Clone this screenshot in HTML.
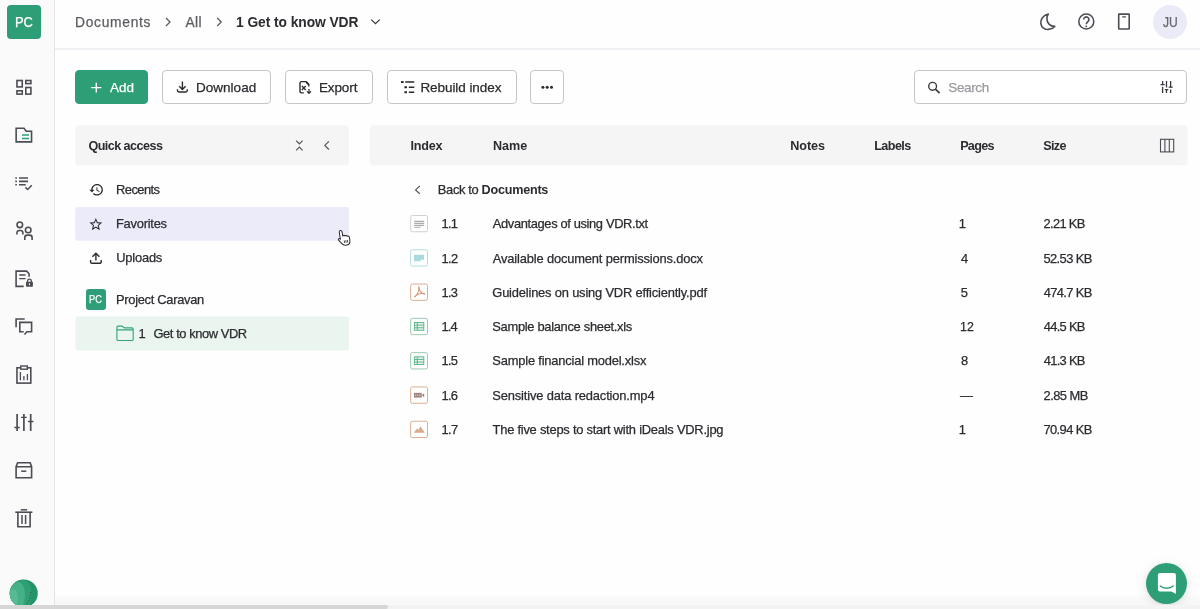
<!DOCTYPE html>
<html lang="en">
<head>
<meta charset="utf-8">
<title>Documents</title>
<style>
*{box-sizing:border-box;margin:0;padding:0}
html,body{width:1200px;height:609px;overflow:hidden;background:#fefefe}
body{font-family:"Liberation Sans",sans-serif;color:#2b2b30;font-size:12.6px;position:relative}
.abs{position:absolute}
.t{position:absolute;white-space:nowrap;line-height:20px;height:20px}
.r{-webkit-text-stroke:0.25px currentColor}
#side{position:absolute;left:0;top:0;width:55px;height:609px;background:#fafafa;border-right:1px solid #e4e4e8}
#logo{position:absolute;left:7px;top:5px;width:34px;height:34px;border-radius:4px;background:#2e9e76}
#hdr{position:absolute;left:55px;top:48px;width:1145px;height:2px;background:#f0f0f4}
.btn{position:absolute;top:70px;height:34px;border:1px solid #c6c6ca;border-radius:4px;background:#fff}
.bar{position:absolute;top:125px;height:40.5px;background:#f5f5f5;border-radius:4px}
.row{position:absolute;left:75px;width:274px;height:34px;border-radius:3px}
.fi{position:absolute;left:410px;width:18px;height:18px;border:1px solid #ccc;border-radius:2px;background:#fff}
#ov{position:absolute;left:0;top:0;width:1200px;height:609px;pointer-events:none}
</style>
</head>
<body>
<div id="side"></div>
<div id="logo"></div>
<div id="hdr"></div>
<div class="abs" style="left:1153px;top:4.5px;width:34px;height:34px;border-radius:50%;background:#ebebf8"></div>

<div class="btn" style="left:75px;width:73px;background:#2e9e76;border-color:#2e9e76"></div>
<div class="btn" style="left:162px;width:109px"></div>
<div class="btn" style="left:285px;width:88px"></div>
<div class="btn" style="left:387px;width:129.5px"></div>
<div class="btn" style="left:530px;width:34px"></div>
<div class="btn" style="left:913.5px;width:273.5px"></div>

<svg style="position:absolute;left:0;top:0" width="1200" height="609" viewBox="0 0 1200 609">
<rect x="75.200" y="125.200" width="273.800" height="40.300" rx="4" fill="#f5f5f5"/>
<rect x="369.600" y="125.200" width="818" height="40.300" rx="4" fill="#f5f5f5"/>
<rect x="75.200" y="207.100" width="273.800" height="33.700" rx="3" fill="#ebebf9"/>
<rect x="75.400" y="316.600" width="273.600" height="33.900" rx="3" fill="#e9f5ee"/>
</svg>
<div class="abs" style="left:85.5px;top:289px;width:20.5px;height:20.5px;border-radius:3px;background:#2e9e76"></div>



<div id="tx" style="position:absolute;left:0;top:0;width:1200px;height:609px;will-change:transform">
<div class="t r" id="bc1" style="left:75.05px;top:13.40px;font-size:13.8px;font-weight:400;color:#5c5c63;letter-spacing:0.706px">Documents</div>
<div class="t r" id="bc2" style="left:185.50px;top:13.40px;font-size:13.8px;font-weight:400;color:#5c5c63;letter-spacing:0.375px">All</div>
<div class="t" id="bc3" style="left:236.05px;top:13.40px;font-size:13.8px;font-weight:700;color:#2b2b30;letter-spacing:-0.063px">1 Get to know VDR</div>
<div class="t r" id="logot" style="left:15.30px;top:11.90px;font-size:14.6px;font-weight:400;color:#ffffff;letter-spacing:0.000px;transform:scaleX(0.8843);transform-origin:0 50%">PC</div>
<div class="t r" id="ju" style="left:1162.50px;top:12.30px;font-size:14.5px;font-weight:400;color:#66666e;letter-spacing:0.000px;transform:scaleX(0.8341);transform-origin:0 50%">JU</div>
<div class="t r" id="b1" style="left:109.90px;top:78.00px;font-size:13.5px;font-weight:400;color:#ffffff;letter-spacing:-0.000px">Add</div>
<div class="t r" id="b2" style="left:195.90px;top:78.00px;font-size:13.5px;font-weight:400;color:#2b2b30;letter-spacing:0.036px">Download</div>
<div class="t r" id="b3" style="left:318.90px;top:78.00px;font-size:13.5px;font-weight:400;color:#2b2b30;letter-spacing:-0.100px">Export</div>
<div class="t r" id="b4" style="left:420.40px;top:78.00px;font-size:13.5px;font-weight:400;color:#2b2b30;letter-spacing:-0.062px">Rebuild index</div>
<div class="t r" id="b5" style="left:948.25px;top:78.00px;font-size:13.5px;font-weight:400;color:#9a9aa0;letter-spacing:-0.350px">Search</div>
<div class="t" id="qa" style="left:88.40px;top:135.80px;font-size:12.6px;font-weight:700;color:#2b2b30;letter-spacing:-0.545px">Quick access</div>
<div class="t r" id="q1" style="left:116.00px;top:180.20px;font-size:12.9px;font-weight:400;color:#2b2b30;letter-spacing:-0.542px">Recents</div>
<div class="t r" id="q2" style="left:116.00px;top:214.20px;font-size:12.9px;font-weight:400;color:#2b2b30;letter-spacing:-0.250px">Favorites</div>
<div class="t r" id="q3" style="left:116.25px;top:248.20px;font-size:12.9px;font-weight:400;color:#2b2b30;letter-spacing:-0.208px">Uploads</div>
<div class="t r" id="q4" style="left:116.00px;top:290.00px;font-size:12.9px;font-weight:400;color:#2b2b30;letter-spacing:-0.304px">Project Caravan</div>
<div class="t r" id="q5a" style="left:138.38px;top:324.20px;font-size:12.9px;font-weight:400;color:#2b2b30;letter-spacing:0.000px">1</div>
<div class="t r" id="q5" style="left:153.50px;top:324.20px;font-size:12.9px;font-weight:400;color:#2b2b30;letter-spacing:-0.429px">Get to know VDR</div>
<div class="t r" id="pc2" style="left:89.40px;top:289.60px;font-size:10.4px;font-weight:400;color:#ffffff;letter-spacing:0.000px;transform:scaleX(0.8872);transform-origin:0 50%">PC</div>
<div class="t" id="h1" style="left:410.55px;top:135.80px;font-size:12.6px;font-weight:700;color:#2b2b30;letter-spacing:-0.250px">Index</div>
<div class="t" id="h2" style="left:492.95px;top:135.80px;font-size:12.6px;font-weight:700;color:#2b2b30;letter-spacing:-0.000px">Name</div>
<div class="t" id="h3" style="left:790.25px;top:135.80px;font-size:12.6px;font-weight:700;color:#2b2b30;letter-spacing:-0.062px">Notes</div>
<div class="t" id="h4" style="left:874.15px;top:135.80px;font-size:12.6px;font-weight:700;color:#2b2b30;letter-spacing:-0.550px">Labels</div>
<div class="t" id="h5" style="left:960.15px;top:135.80px;font-size:12.6px;font-weight:700;color:#2b2b30;letter-spacing:-0.687px">Pages</div>
<div class="t" id="h6" style="left:1043.30px;top:135.80px;font-size:12.6px;font-weight:700;color:#2b2b30;letter-spacing:-0.667px">Size</div>
<div class="t r" id="bk1" style="left:437.80px;top:180.20px;font-size:12.9px;font-weight:400;color:#2b2b30;letter-spacing:-0.333px">Back to</div>
<div class="t" id="bk2" style="left:481.55px;top:180.20px;font-size:12.6px;font-weight:700;color:#2b2b30;letter-spacing:-0.219px">Documents</div>
<div class="t r" id="i0" style="left:441.55px;top:214.25px;font-size:12.9px;font-weight:400;color:#2b2b30;letter-spacing:-0.750px">1.1</div>
<div class="t r" id="n0" style="left:492.80px;top:214.25px;font-size:12.9px;font-weight:400;color:#2b2b30;letter-spacing:-0.365px">Advantages of using VDR.txt</div>
<div class="t r" id="p0" style="left:958.67px;top:214.25px;font-size:12.9px;font-weight:400;color:#2b2b30;letter-spacing:0.000px">1</div>
<div class="t r" id="s0" style="left:1043.50px;top:214.25px;font-size:12.9px;font-weight:400;color:#2b2b30;letter-spacing:-0.667px">2.21 KB</div>
<div class="t r" id="i1" style="left:441.55px;top:248.52px;font-size:12.9px;font-weight:400;color:#2b2b30;letter-spacing:-0.625px">1.2</div>
<div class="t r" id="n1" style="left:492.80px;top:248.52px;font-size:12.9px;font-weight:400;color:#2b2b30;letter-spacing:-0.154px">Available document permissions.docx</div>
<div class="t r" id="p1" style="left:961.10px;top:248.52px;font-size:12.9px;font-weight:400;color:#2b2b30;letter-spacing:0.000px">4</div>
<div class="t r" id="s1" style="left:1043.50px;top:248.52px;font-size:12.9px;font-weight:400;color:#2b2b30;letter-spacing:-0.607px">52.53 KB</div>
<div class="t r" id="i2" style="left:441.55px;top:282.79px;font-size:12.9px;font-weight:400;color:#2b2b30;letter-spacing:-0.750px">1.3</div>
<div class="t r" id="n2" style="left:492.30px;top:282.79px;font-size:12.9px;font-weight:400;color:#2b2b30;letter-spacing:-0.184px">Guidelines on using VDR efficiently.pdf</div>
<div class="t r" id="p2" style="left:960.85px;top:282.79px;font-size:12.9px;font-weight:400;color:#2b2b30;letter-spacing:0.000px">5</div>
<div class="t r" id="s2" style="left:1043.75px;top:282.79px;font-size:12.9px;font-weight:400;color:#2b2b30;letter-spacing:-0.643px">474.7 KB</div>
<div class="t r" id="i3" style="left:441.55px;top:317.06px;font-size:12.9px;font-weight:400;color:#2b2b30;letter-spacing:-0.875px">1.4</div>
<div class="t r" id="n3" style="left:492.30px;top:317.06px;font-size:12.9px;font-weight:400;color:#2b2b30;letter-spacing:-0.304px">Sample balance sheet.xls</div>
<div class="t r" id="p3" style="left:960.30px;top:317.06px;font-size:12.9px;font-weight:400;color:#2b2b30;letter-spacing:0.000px;transform:scaleX(0.9612);transform-origin:0 50%">12</div>
<div class="t r" id="s3" style="left:1043.75px;top:317.06px;font-size:12.9px;font-weight:400;color:#2b2b30;letter-spacing:-0.708px">44.5 KB</div>
<div class="t r" id="i4" style="left:441.55px;top:351.33px;font-size:12.9px;font-weight:400;color:#2b2b30;letter-spacing:-0.750px">1.5</div>
<div class="t r" id="n4" style="left:492.30px;top:351.33px;font-size:12.9px;font-weight:400;color:#2b2b30;letter-spacing:-0.192px">Sample financial model.xlsx</div>
<div class="t r" id="p4" style="left:960.92px;top:351.33px;font-size:12.9px;font-weight:400;color:#2b2b30;letter-spacing:0.000px">8</div>
<div class="t r" id="s4" style="left:1043.75px;top:351.33px;font-size:12.9px;font-weight:400;color:#2b2b30;letter-spacing:-0.708px">41.3 KB</div>
<div class="t r" id="i5" style="left:441.55px;top:385.60px;font-size:12.9px;font-weight:400;color:#2b2b30;letter-spacing:-0.750px">1.6</div>
<div class="t r" id="n5" style="left:492.30px;top:385.60px;font-size:12.9px;font-weight:400;color:#2b2b30;letter-spacing:-0.148px">Sensitive data redaction.mp4</div>
<div class="t r" id="p5" style="left:959.93px;top:385.60px;font-size:12.9px;font-weight:400;color:#2b2b30;letter-spacing:0.000px">—</div>
<div class="t r" id="s5" style="left:1043.50px;top:385.60px;font-size:12.9px;font-weight:400;color:#2b2b30;letter-spacing:-0.542px">2.85 MB</div>
<div class="t r" id="i6" style="left:441.55px;top:419.87px;font-size:12.9px;font-weight:400;color:#2b2b30;letter-spacing:-0.625px">1.7</div>
<div class="t r" id="n6" style="left:492.55px;top:419.87px;font-size:12.9px;font-weight:400;color:#2b2b30;letter-spacing:-0.232px">The five steps to start with iDeals VDR.jpg</div>
<div class="t r" id="p6" style="left:958.67px;top:419.87px;font-size:12.9px;font-weight:400;color:#2b2b30;letter-spacing:0.000px">1</div>
<div class="t r" id="s6" style="left:1043.50px;top:419.87px;font-size:12.9px;font-weight:400;color:#2b2b30;letter-spacing:-0.607px">70.94 KB</div>
</div>

<div class="abs" style="left:55px;top:594px;width:1145px;height:11px;background:linear-gradient(#fefefe,#f9f9f9 40%,#f8f8f8)"></div>
<!-- chat button -->
<div class="abs" style="left:1146px;top:562.5px;width:41px;height:41px;border-radius:50%;background:#2e9e76;box-shadow:0 1px 6px rgba(0,0,0,.08),0 2px 14px rgba(0,0,0,.08)"></div>

<svg id="ov" width="1200" height="609" viewBox="0 0 1200 609" fill="none">
<!-- ===== left sidebar icons ===== -->
<g stroke="#4c4c54" stroke-width="1.6" fill="none" stroke-linejoin="miter">
  <!-- dashboard -->
  <rect x="16.95" y="80.5" width="5.3" height="6.4"/>
  <rect x="25.8" y="80.5" width="5.1" height="3.1"/>
  <rect x="16.95" y="90.8" width="5.3" height="3.3"/>
  <rect x="25.8" y="87.5" width="5.1" height="6.6"/>
  <!-- folder -->
  <path d="M16.15 128.2 H24 L26.3 131.2 H31.55 V141.9 H16.15 Z"/>
  <!-- checklist -->
  <path d="M19 178 H28 M19 181.4 H28 M19 184.7 H25.7"/>
  <path d="M15.3 178 H16.9 M15.3 181.4 H16.9 M15.3 184.7 H16.9"/>
  <path d="M25.4 187.4 L27.7 189.5 L31.8 185.3" stroke-width="1.5"/>
  <!-- users -->
  <circle cx="19.8" cy="224.8" r="2.8"/>
  <path d="M16.95 234.6 V232.8 A2.3 2.3 0 0 1 19.25 230.5 H20.6 A2.3 2.3 0 0 1 22.9 232.8 V234.6"/>
  <circle cx="28.2" cy="230" r="2.8"/>
  <path d="M24.8 239.9 V237.600 A2.5 2.5 0 0 1 27.300 235.100 H29.600 A2.5 2.5 0 0 1 32.100 237.600 V239.900"/>
  <!-- doc lock -->
  <path d="M23.7 286.4 H16.1 V271.1 H26.6 L29.1 273.7 V276.7"/>
  <path d="M19.2 275 H25.5 M19.2 278.6 H25.5" stroke-width="1.4"/>
  <path d="M27.6 282 V281 A1.85 1.85 0 0 1 31.3 281 V282" stroke-width="1.3"/>
  <!-- q&a -->
  <path d="M16.1 327.3 V319 H24.7"/>
  <path d="M23.7 331.8 H19.8 V322.4 H31.6 V331.8 H26.9 L24.5 334.5"/>
  <!-- reports clipboard -->
  <rect x="16.95" y="367.8" width="13.85" height="15.3"/>
  <rect x="20.8" y="366" width="6.5" height="3.2" fill="#fafafa" stroke-width="1.4"/>
  <path d="M20.4 372 V380.3 M23.9 376 V380.3 M27.4 374 V380.3" stroke-width="1.3"/>
  <!-- sliders -->
  <path d="M17.1 414 V430.9 M23.9 414 V430.9 M30.7 414 V430.9" stroke-width="1.7"/>
  <path d="M14.4 427.5 H19.8 M21.1 417.4 H26.7 M28 421.5 H33.4" stroke-width="1.4"/>
  <!-- archive -->
  <path d="M16.1 466.6 L17.6 462.8 H30.2 L31.6 466.6 V477.8 H16.1 Z M16.1 466.8 H31.6"/>
  <path d="M21.2 471.2 H26.3" stroke-width="1.5"/>
  <!-- trash -->
  <path d="M15.3 512.2 H32.4"/>
  <path d="M20.75 509.8 H27.1" stroke-width="1.5"/>
  <path d="M17.9 512.2 V526.8 H30.1 V512.2"/>
  <path d="M22 515 V524 M25.6 515 V524" stroke-width="1.5"/>
</g>
<rect x="26" y="281.8" width="6.9" height="4.9" rx="0.6" fill="#4c4c54"/>
<rect x="28.9" y="283.4" width="1.1" height="1.7" fill="#fafafa"/>
<path d="M22 135 H29 M22 138.45 H29" stroke="#2e9e76" stroke-width="1.6"/>

<!-- ===== header ===== -->
<g stroke="#5c5c63" stroke-width="1.3" fill="none" stroke-linecap="butt">
  <path d="M166 18 L170 22 L166 26"/>
  <path d="M217.2 18 L221.2 22 L217.2 26"/>
  <path d="M371.3 19.6 L375.5 23.7 L379.7 19.6" stroke="#3a3a40"/>
</g>
<g stroke="#4c4c54" stroke-width="1.6" fill="none" stroke-linejoin="round">
  <path d="M1048.3 14 C1043 15.3 1040.4 19.6 1040.8 23.3 C1041.3 27.6 1045 29.7 1048.4 29.4 C1051.2 29.1 1053.6 27.9 1054.8 26.4 C1050.3 26.6 1046.6 22.9 1046.9 18.3 C1047 16.7 1047.5 15.2 1048.3 14 Z"/>
  <circle cx="1086.3" cy="21.5" r="7.5" stroke-width="1.55"/>
  <path d="M1083.7 19.6 A2.6 2.6 0 1 1 1087.9 21.6 C1086.900 22.400 1086.300 22.900 1086.300 24.300" stroke-width="1.6"/>
  <rect x="1118.7" y="14.1" width="10.5" height="14.9" rx="0.5" stroke-linejoin="miter"/>
  <path d="M1122.2 16.9 H1125.9" stroke-width="1.3"/>
</g>
<circle cx="1086.3" cy="26.4" r="0.9" fill="#4c4c54"/>

<!-- ===== toolbar ===== -->
<path d="M96.3 82.7 V92.6 M91.2 87.65 H101.4" stroke="#fff" stroke-width="1.4"/>
<g stroke="#2b2b30" stroke-width="1.4" fill="none" stroke-linejoin="round" stroke-linecap="butt">
  <!-- download -->
  <path d="M177.5 89.2 V90.6 A1.4 1.4 0 0 0 178.9 92 H185.9 A1.4 1.4 0 0 0 187.3 90.6 V89.2"/>
  <path d="M182.4 81.6 V89.3 M179.2 86.2 L182.4 89.4 L185.6 86.2"/>
  <!-- export -->
  <path d="M303.8 92.9 H301.4 A1.4 1.4 0 0 1 300 91.5 V83 A1.4 1.4 0 0 1 301.4 81.6 H306 L308.8 84.5 V86.6"/>
  <path d="M306.300 82.100 L308.600 84.500" stroke-width="1.8"/>
  <path d="M301.9 86 L305.7 90 M305.7 86 L301.9 90" stroke-width="1.3"/>
  <path d="M309 89 V93.2 M306.9 91.3 L309 93.4 L311.1 91.3" stroke-width="1.2"/>
  <!-- rebuild index -->
  <path d="M405.3 82 H414.3 M408.8 87.3 H414.3 M408.8 92.3 H414.3" stroke-width="1.6"/>
  <path d="M401 82 H403.6 M404.4 87.3 H407 M404.4 92.3 H407" stroke-width="2"/>
</g>
<g fill="#2b2b30">
  <circle cx="542.9" cy="87.3" r="1.5"/><circle cx="547.2" cy="87.3" r="1.5"/><circle cx="551.5" cy="87.3" r="1.5"/>
</g>
<!-- search -->
<g stroke="#3a3a40" stroke-width="1.5" fill="none">
  <circle cx="932.6" cy="86.3" r="3.9" stroke-width="1.4"/>
  <path d="M935.4 89.1 L939.6 93.2" stroke-width="1.7"/>
</g>
<g stroke="#3a3a40" stroke-width="1.3" fill="none">
  <path d="M1162.600 81 V85 M1162.600 86.800 V93 M1166.500 81 V87.500 M1166.500 89.200 V93 M1170.600 81 V87.600 M1170.600 89.400 V93"/>
  <path d="M1160.500 84.600 H1164.700 M1164.900 89.700 H1168.300 M1168.700 87.200 H1172.700" stroke-width="1.2"/>
</g>

<!-- ===== quick access ===== -->
<g stroke="#55555c" stroke-width="1.2" fill="none">
  <path d="M296.1 140.6 L299.4 143.8 L302.6 140.6 M296.1 150.3 L299.4 147 L302.6 150.3"/>
  <path d="M328.9 141.4 L324.8 145.4 L328.9 149.5"/>
  <path d="M419.8 186 L415.6 189.9 L419.8 193.8"/>
</g>
<!-- history (material) -->
<path transform="translate(88.65 182) scale(0.648)" fill="#2b2b30" d="M13 3c-4.970 0-9 4.030-9 9H1l3.890 3.890.070.140L9 12H6c0-3.870 3.130-7 7-7s7 3.130 7 7-3.130 7-7 7c-1.930 0-3.680-.790-4.940-2.060l-1.420 1.420C8.270 19.990 10.510 21 13 21c4.970 0 9-4.030 9-9s-4.030-9-9-9zm-1 5v5l4.280 2.540.720-1.210-3.500-2.080V8H12z"/>
<!-- star (material) -->
<path transform="translate(88.1 216.6) scale(0.645)" fill="#2b2b30" d="M22 9.240l-7.190-.620L12 2 9.190 8.630 2 9.240l5.460 4.730L5.820 21 12 17.270 18.180 21l-1.630-7.030L22 9.240zM12 15.400l-3.760 2.270 1-4.280-3.320-2.880 4.380-.380L12 6.100l1.710 4.040 4.380.380-3.320 2.880 1 4.280L12 15.400z"/>
<!-- upload -->
<g stroke="#2b2b30" stroke-width="1.4" fill="none" stroke-linejoin="round">
  <path d="M90.6 260 V261.9 A1.4 1.4 0 0 0 92 263.3 H99.8 A1.4 1.4 0 0 0 101.2 261.9 V260"/>
  <path d="M95.9 260.6 V253.4 M92.4 256.7 L95.9 253.2 L99.4 256.7"/>
</g>
<!-- folder green -->
<path d="M116.9 339.3 V327.3 A1.2 1.2 0 0 1 118.1 326.1 H122 L124.4 327.9 H132 A1.2 1.2 0 0 1 133.2 329.1 V339.300 A1.2 1.2 0 0 1 132 340.500 H118.100 A1.2 1.2 0 0 1 116.900 339.300 Z M116.900 329.900 H133.200" stroke="#35a27b" stroke-width="1.1" fill="none"/>
<!-- cursor hand -->
<g transform="translate(336.300 229.700) rotate(-9 3.6 0.8) scale(1.13)">
  <path d="M3.6 0.8 C4.4 0.8 4.9 1.4 4.9 2.2 V6 L5.2 6 C5.2 5.300 6.7 5.300 6.900 6.200 C7.300 5.700 8.600 5.800 8.700 6.800 C9.200 6.400 10.400 6.500 10.500 7.600 V10.800 C10.500 12.900 9.400 14.300 7.300 14.300 H6.200 C4.700 14.300 3.900 13.600 3.100 12.400 L0.700 8.900 C0.200 8.100 1.200 7.200 2 8 L2.400 8.500 V2.200 C2.400 1.400 2.900 0.800 3.600 0.800 Z" fill="#fff" stroke="#2b2b30" stroke-width="0.9" stroke-linejoin="round"/>
  <path d="M5.600 10 V12.300 M7 10 V12.300 M8.400 10 V12.300" stroke="#2b2b30" stroke-width="0.7"/>
</g>

<!-- ===== table header columns icon ===== -->
<g stroke="#4c4c54" stroke-width="1.1" fill="none">
  <rect x="1160.5" y="139.3" width="13.2" height="12.6"/>
  <path d="M1164.9 139.3 V151.9 M1169.3 139.3 V151.9"/>
</g>

<g transform="translate(410.2 214.95)"><rect x="0.5" y="0.5" width="16.8" height="16.3" rx="1.6" fill="#fff" stroke="#d0d0d0" stroke-width="1"/><path d="M4 6.400 H14 M4 8.400 H14 M4 10.400 H14 M4 12.300 H10.500" stroke="#a9adab" stroke-width="1.1"/></g>
<g transform="translate(410.2 249.25)"><rect x="0.5" y="0.5" width="16.8" height="16.3" rx="1.6" fill="#fff" stroke="#b2dce0" stroke-width="1"/><path d="M3.750 5.600 H13.800 V10.600 H10.500 V12.100 H3.750 Z" fill="#a9dade"/></g>
<g transform="translate(410.2 283.55)"><rect x="0.5" y="0.5" width="16.8" height="16.3" rx="1.6" fill="#fff" stroke="#dcae92" stroke-width="1"/><g stroke="#d99678" stroke-width="1.1" fill="none" stroke-linecap="round"><path d="M8.600 3.600 C9.400 6.100 7.300 11.100 4.700 13.200"/><path d="M8.600 3.600 C8.800 6.600 10.800 10.100 14.400 10.300"/><path d="M4.700 13.200 C6.800 10.100 11.300 9.300 14.400 10.300"/></g></g>
<g transform="translate(410.2 317.85)"><rect x="0.5" y="0.5" width="16.8" height="16.3" rx="1.6" fill="#fff" stroke="#9ccab1" stroke-width="1"/><g stroke="#5cb88a" stroke-width="1" fill="#eef3f0"><rect x="4.200" y="4.700" width="9.400" height="7.700"/><path d="M4.200 7.300 H13.600 M4.200 9.900 H13.600 M7.100 4.700 V12.400" fill="none"/></g></g>
<g transform="translate(410.2 352.15)"><rect x="0.5" y="0.5" width="16.8" height="16.3" rx="1.6" fill="#fff" stroke="#9ccab1" stroke-width="1"/><g stroke="#5cb88a" stroke-width="1" fill="#eef3f0"><rect x="4.200" y="4.700" width="9.400" height="7.700"/><path d="M4.200 7.300 H13.600 M4.200 9.900 H13.600 M7.100 4.700 V12.400" fill="none"/></g></g>
<g transform="translate(410.2 386.45)"><rect x="0.5" y="0.5" width="16.8" height="16.3" rx="1.6" fill="#fff" stroke="#dcae92" stroke-width="1"/><rect x="3.700" y="6.400" width="7.800" height="4.700" fill="#9a8582"/><path d="M11.500 8.700 L14 6.800 V10.700 Z" fill="#9a8582"/><path d="M4.700 8.700 H10.500" stroke="#e6c3ae" stroke-width="1.200" stroke-dasharray="1.300 0.800"/></g>
<g transform="translate(410.2 420.75)"><rect x="0.5" y="0.5" width="16.8" height="16.3" rx="1.6" fill="#fff" stroke="#dcae92" stroke-width="1"/><path d="M3.600 12 L6.750 7.700 L8.400 8.900 L10.300 5.600 L14.700 12 Z" fill="#d9ab8f"/></g>
<!-- bottom avatar -->
<defs><clipPath id="avc"><circle cx="23.75" cy="593.4" r="14"/></clipPath></defs>
<g clip-path="url(#avc)">
  <rect x="9" y="579" width="30" height="30" fill="#249468"/>
  <ellipse cx="19" cy="598" rx="12" ry="19" fill="#2f9f74" transform="rotate(14 19 598)"/>
  <ellipse cx="15.500" cy="599" rx="9" ry="17" fill="#46b086" transform="rotate(12 15.500 599)"/>
  <ellipse cx="11.500" cy="602" rx="6" ry="13" fill="#58ba92" transform="rotate(10 11.500 602)"/>
  <path d="M31 592 C30.500 597 29 601 26.500 605" stroke="#3d3a40" stroke-width="0.8" fill="none" stroke-dasharray="1.2 1.5"/>
</g>
<!-- ===== chat button icon ===== -->
<path d="M1159.900 572.900 H1173.900 A2 2 0 0 1 1175.900 574.900 V593.900 L1171.500 591.600 H1159.900 A2 2 0 0 1 1157.900 589.600 V574.900 A2 2 0 0 1 1159.900 572.900 Z" fill="#fff"/>
<path d="M1160.300 586 C1163.500 588.900 1170 588.900 1173.100 586" stroke="#2e9e76" stroke-width="1.4" fill="none" stroke-linecap="round"/>
</svg>


<!-- bottom scrollbar -->
<div class="abs" style="left:0;top:604.5px;width:1200px;height:5px;background:#f3f3f3"></div>
<div class="abs" style="left:0;top:605px;width:388px;height:4px;background:#d6d6d6;border-radius:0 3px 3px 0"></div>
</body>
</html>
